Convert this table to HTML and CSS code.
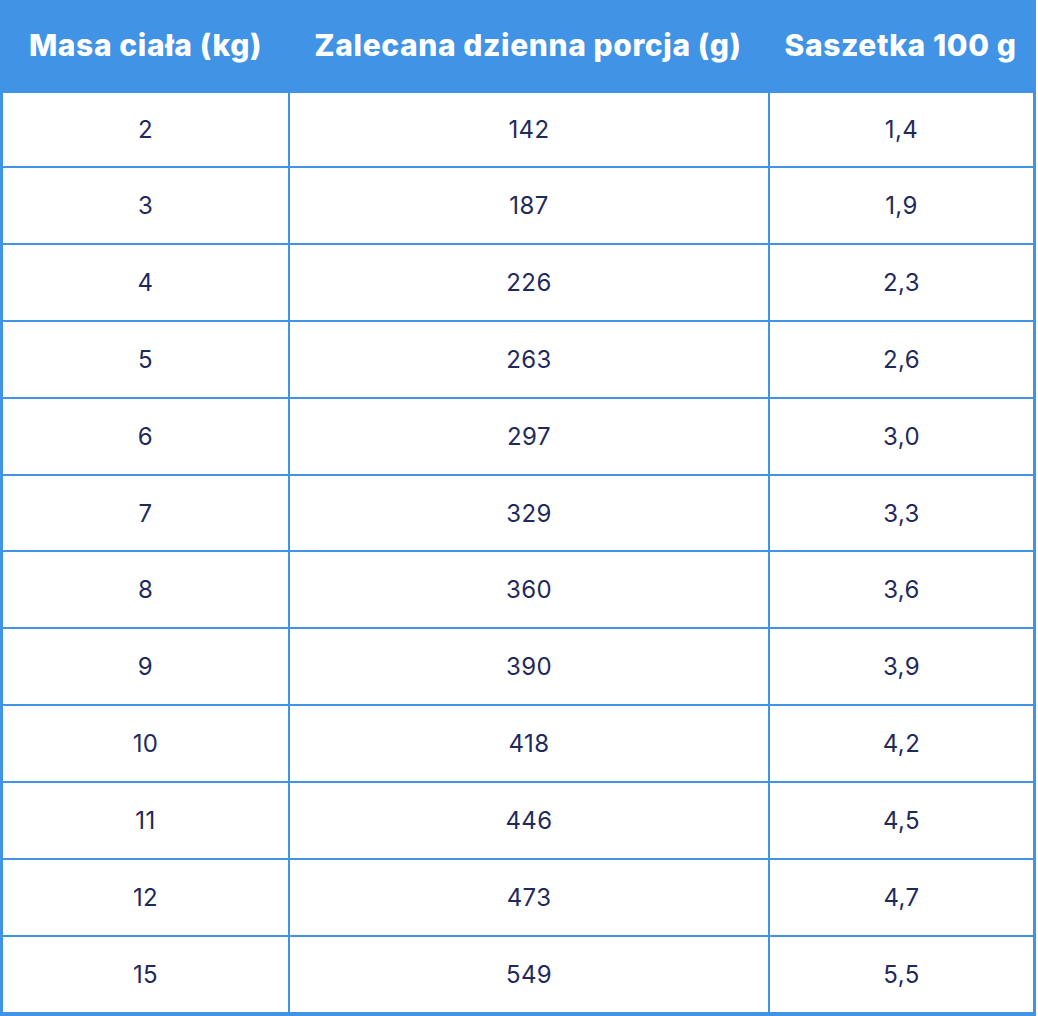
FILE: index.html
```html
<!DOCTYPE html>
<html lang="pl">
<head>
<meta charset="utf-8">
<title>Tabela żywienia</title>
<link rel="stylesheet" href="styles.css">
</head>
<body>
<table class="feed">
  <colgroup>
    <col class="c1"><col class="c2"><col class="c3">
  </colgroup>
  <thead>
    <tr><th>Masa ciała (kg)</th><th>Zalecana dzienna porcja (g)</th><th>Saszetka 100 g</th></tr>
  </thead>
  <tbody>
    <tr class="first"><td>2</td><td>142</td><td>1,4</td></tr>
    <tr><td>3</td><td>187</td><td>1,9</td></tr>
    <tr><td>4</td><td>226</td><td>2,3</td></tr>
    <tr><td>5</td><td>263</td><td>2,6</td></tr>
    <tr><td>6</td><td>297</td><td>3,0</td></tr>
    <tr><td>7</td><td>329</td><td>3,3</td></tr>
    <tr><td>8</td><td>360</td><td>3,6</td></tr>
    <tr><td>9</td><td>390</td><td>3,9</td></tr>
    <tr><td>10</td><td>418</td><td>4,2</td></tr>
    <tr><td>11</td><td>446</td><td>4,5</td></tr>
    <tr><td>12</td><td>473</td><td>4,7</td></tr>
    <tr><td>15</td><td>549</td><td>5,5</td></tr>
  </tbody>
</table>
</body>
</html>
```
FILE: styles.css
```css
html, body {
  margin: 0;
  padding: 0;
  background: #ffffff;
}
.feed {
  width: 1036px;
  table-layout: fixed;
  border-collapse: separate;
  border-spacing: 0;
  border-left: 3px solid #4193e6;
  border-right: 3px solid #4193e6;
  border-bottom: 4px solid #4193e6;
}
.c1 { width: 285px; }
.c2 { width: 480px; }
.c3 { width: 265px; }
.feed th {
  background: #4193e6;
  color: #ffffff;
  font-family: "Inter", sans-serif;
  font-weight: 800;
  font-size: 30px;
  line-height: 36px;
  height: 91px;
  box-sizing: border-box;
  padding: 0 0 2px;
  text-align: center;
  vertical-align: middle;
  letter-spacing: 0.6px;
}
.feed td {
  font-family: "Inter", sans-serif;
  font-weight: 400;
  font-size: 24px;
  letter-spacing: 0.4px;
  color: #1f2a5c;
  text-align: center;
  vertical-align: middle;
  padding: 0;
  height: 74.9px;
  border-top: 2px solid #4193e6;
}
.feed .first td {
  height: 73px;
}
.feed td + td {
  border-left: 2px solid #4193e6;
}
```
